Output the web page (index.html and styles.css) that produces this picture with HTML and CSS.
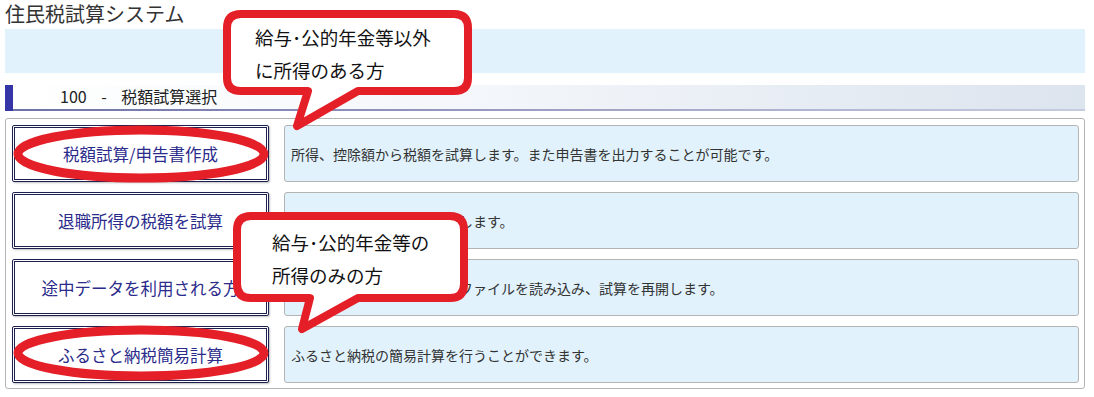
FILE: index.html
```html
<!DOCTYPE html>
<html lang="ja">
<head>
    <meta charset="UTF-8">
    <title>住民税試算システム</title>
    <link rel="stylesheet" href="styles.css">
</head>
<body>
    <div class="page">
        <h1 class="title">住民税試算システム</h1>
        <div class="info-bar"></div>

        <h2 class="section-head">100 - 税額試算選択</h2>

        <div class="menu">
            <div class="menu-row">
                <button class="menu-btn">税額試算/申告書作成</button>
                <div class="menu-desc">所得、控除額から税額を試算します。また申告書を出力することが可能です。</div>
            </div>
            <div class="menu-row">
                <button class="menu-btn">退職所得の税額を試算</button>
                <div class="menu-desc">退職所得に係る税額を試算します。</div>
            </div>
            <div class="menu-row">
                <button class="menu-btn">途中データを利用される方</button>
                <div class="menu-desc">一時保存した途中データのファイルを読み込み、試算を再開します。</div>
            </div>
            <div class="menu-row">
                <button class="menu-btn">ふるさと納税簡易計算</button>
                <div class="menu-desc">ふるさと納税の簡易計算を行うことができます。</div>
            </div>
        </div>

        <!-- annotations drawn over the page -->
        <svg class="marks" width="1094" height="397" viewBox="0 0 1094 397">
            <ellipse cx="141" cy="154" rx="123" ry="24" />
            <ellipse cx="141" cy="353" rx="123" ry="23" />
            <path d="M241 14 H454 Q468 14 468 28 V78 Q468 91 454 91 H358 L297 126 L308 91 H241 Q227 91 227 78 V28 Q227 14 241 14 Z" />
            <path d="M251 216 H450 Q464 216 464 230 V284 Q464 298 450 298 H358 L302 329 L310 298 H251 Q237 298 237 284 V230 Q237 216 251 216 Z" />
        </svg>
        <div class="note note-top">給与･公的年金等以外<br>に所得のある方</div>
        <div class="note note-mid">給与･公的年金等の<br>所得のみの方</div>
    </div>
</body>
</html>
```

FILE: styles.css
```css
* {
    margin: 0;
    padding: 0;
    box-sizing: border-box;
}

body {
    font-family: "Noto Sans CJK JP", "Noto Sans", sans-serif;
    color: #333;
    background: #fff;
}

.page {
    position: relative;
    width: 1094px;
    height: 397px;
    padding: 0 9px 0 5px;
    overflow: hidden;
}

.title {
    height: 29px;
    font-size: 20px;
    font-weight: normal;
    line-height: 28px;
    color: #333;
}

.info-bar {
    height: 44px;
    background-color: #e1f2fc;
}

.section-head {
    margin-top: 12px;
    height: 26px;
    padding-left: 47px;
    font-size: 16px;
    font-weight: normal;
    line-height: 23px;
    word-spacing: 11px;
    color: #222;
    border-left: 8px solid #3535a8;
    background: linear-gradient(90deg, #ffffff 0%, #f3f6fa 45%, #dce4ee 100%);
    position: relative;
}

.section-head::after {
    content: "";
    position: absolute;
    left: 0;
    right: 0;
    bottom: 0;
    height: 2px;
    background: linear-gradient(90deg, #6f72a8 0%, #a5a9c8 60%, #c6cde0 100%);
}

.menu {
    margin-top: 7px;
    border: 1px solid #b4b4b4;
    border-radius: 3px;
    padding: 6px 5px 5px 6px;
    display: flex;
    flex-direction: column;
    gap: 10px;
}

.menu-row {
    display: flex;
    gap: 15px;
    height: 57px;
}

.menu-btn {
    flex: 0 0 257px;
    border: 3px double #1e2050;
    border-radius: 2px;
    background: #fff;
    color: #2b2b8c;
    font-family: inherit;
    font-size: 16.5px;
    box-shadow: 1px 1px 2px rgba(0, 0, 0, 0.25);
    white-space: nowrap;
    overflow: hidden;
}

.menu-desc {
    flex: 1;
    display: flex;
    align-items: center;
    padding-left: 6px;
    font-size: 14px;
    color: #333;
    background-color: #e1f2fc;
    border: 1px solid #b4b4b4;
    border-radius: 3px;
}

.marks {
    position: absolute;
    left: 0;
    top: 0;
}

.marks ellipse {
    fill: none;
    stroke: #e51f28;
    stroke-width: 9;
}

.marks path {
    fill: #fff;
    stroke: #e51f28;
    stroke-width: 8;
    stroke-linejoin: round;
}

.note {
    position: absolute;
    font-size: 18.5px;
    line-height: 33px;
    color: #111;
}

.note-top {
    left: 255px;
    top: 21px;
}

.note-mid {
    left: 272px;
    top: 226px;
}
```
